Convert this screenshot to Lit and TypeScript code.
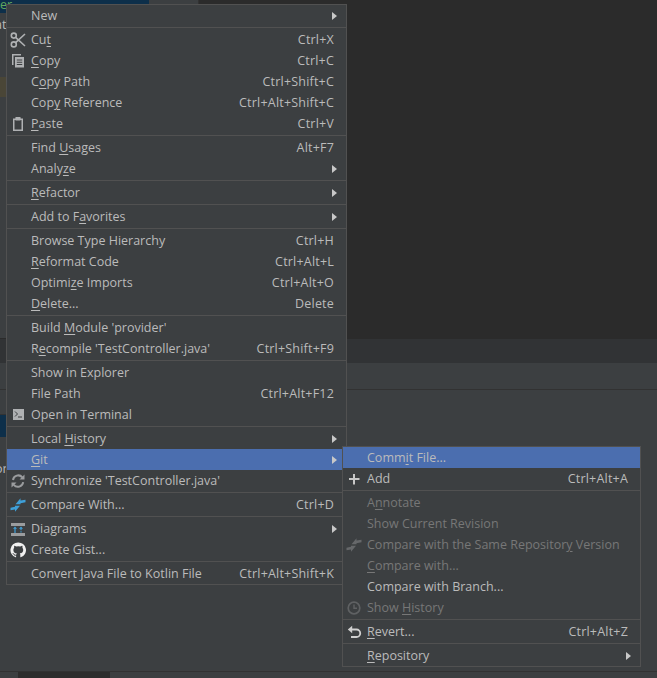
import { LitElement, html, css, svg, nothing, TemplateResult } from "lit";
import { customElement } from "lit/decorators.js";

type Item = { t: string; k?: string; i?: TemplateResult; sub?: boolean; off?: boolean; sel?: boolean } | "-";

const I = {
  cut: svg`<g fill="none" stroke="#afb1b3" stroke-width="1.6"><circle cx="3.800" cy="3.600" r="2.500"/><circle cx="3.800" cy="12.400" r="2.500"/><path d="M5.600 5.400 15 14M5.600 10.600 15 2"/></g>`,
  copy: svg`<path fill="#afb1b3" d="M2 1h9v1.500H3.500V12H2z"/><path fill="#afb1b3" fill-rule="evenodd" d="M5 4h9v10.500H5zM6.800 6.400v1.100h5.400V6.400zM6.800 8.700v1.100h5.400V8.700zM6.800 11v1.100h5.400V11z"/>`,
  paste: svg`<path fill="#afb1b3" fill-rule="evenodd" d="M3 2.500h2.500V1h5v1.500H13V15H3zM4.500 4v9.500h7V4z"/><rect x="5.500" y="2.500" width="5" height="2" fill="#afb1b3"/>`,
  term: svg`<rect x="3" y="2" width="11" height="11" fill="#afb1b3"/><path fill="none" stroke="#3c3f41" stroke-width="1" d="M5 4.500l2.500 2.500L5 9.500M8 10H12"/>`,
  sync: svg`<g fill="none" stroke="#9a9c9e" stroke-width="2"><path d="M3 7a5.300 5.300 0 0 1 9.300-2.700"/><path d="M13.200 9.200A5.300 5.300 0 0 1 3.800 11.800"/></g><path fill="#9a9c9e" d="M14.500 1.500v5h-5zM1.500 14.500v-5h5z"/>`,
  cmp: (c: string) => svg`<path fill=${c} d="M5.500 7.200 10.500 1.200V3.600L15.500 2.800V5.200L10.500 6.200V7.200zM10 8.800 5 14.800V12.400L.5 13.200V10.800L5 9.800V8.800z"/>`,
  diag: svg`<rect x="1" y="2" width="14" height="3" fill="#9a9c9e"/><rect x="1" y="12" width="14" height="3" fill="#9a9c9e"/><path fill="#3e9fd8" d="M5 5.500l2 2.300H5.600V12H4.400V7.800H3zM11 5.500l2 2.300h-1.400v1.400h-1.200V7.800H9zM10.400 10.200h1.200v1.300h-1.200z"/>`,
  gh: svg`<path fill="#f0f0f0" d="M8 .5a7.600 7.600 0 0 0-2.400 14.800c.4.100.5-.2.500-.4v-1.300c-2.100.5-2.500-1-2.500-1-.4-.9-.9-1.100-.9-1.100-.7-.5.100-.5.100-.5.800.1 1.200.8 1.200.8.700 1.200 1.800.8 2.300.6.100-.5.300-.8.500-1-1.700-.2-3.400-.8-3.400-3.700 0-.8.300-1.500.8-2-.1-.2-.3-1 .1-2 0 0 .6-.2 2.100.8a7.300 7.300 0 0 1 3.800 0c1.500-1 2.100-.8 2.100-.8.400 1 .2 1.800.1 2 .5.500.8 1.200.8 2 0 2.900-1.800 3.500-3.400 3.700.3.200.5.700.5 1.400v2.100c0 .2.100.5.500.4A7.600 7.600 0 0 0 8 .5z"/>`,
  plus: svg`<path fill="#c8c8c8" d="M7 3h2v4h4.500v2H9v4.500H7V9H3V7h4z"/>`,
  hist: svg`<circle cx="8" cy="8" r="5.800" fill="none" stroke="#5f6163" stroke-width="1.700"/><path fill="none" stroke="#5f6163" stroke-width="1.400" d="M8 4.500V8.300H11"/>`,
  rev: svg`<path fill="none" stroke="#d0d0d0" stroke-width="1.800" d="M4 5.500h6.500a3.700 3.700 0 0 1 0 7.500H5"/><path fill="#d0d0d0" d="M6.200 1.800v7.400L1.800 5.500z"/>`,
};

const ic = (g: any) => html`<svg width="16" height="16" viewBox="0 0 16 16">${g}</svg>`;

const MAIN: Item[] = [
  { t: "New", sub: true }, "-",
  { t: "Cu&t", k: "Ctrl+X", i: ic(I.cut) },
  { t: "&Copy", k: "Ctrl+C", i: ic(I.copy) },
  { t: "C&opy Path", k: "Ctrl+Shift+C" },
  { t: "Cop&y Reference", k: "Ctrl+Alt+Shift+C" },
  { t: "&Paste", k: "Ctrl+V", i: ic(I.paste) }, "-",
  { t: "Find &Usages", k: "Alt+F7" },
  { t: "Analy&ze", sub: true }, "-",
  { t: "&Refactor", sub: true }, "-",
  { t: "Add to F&avorites", sub: true }, "-",
  { t: "Browse Type Hierarchy", k: "Ctrl+H" },
  { t: "&Reformat Code", k: "Ctrl+Alt+L" },
  { t: "Optimi&ze Imports", k: "Ctrl+Alt+O" },
  { t: "&Delete...", k: "Delete" }, "-",
  { t: "Build &Module 'provider'" },
  { t: "R&ecompile 'TestController.java'", k: "Ctrl+Shift+F9" }, "-",
  { t: "Show in Explorer" },
  { t: "File Path", k: "Ctrl+Alt+F12" },
  { t: "Open in Terminal", i: ic(I.term) }, "-",
  { t: "Local &History", sub: true },
  { t: "&Git", sub: true, sel: true },
  { t: "Synchronize 'TestController.java'", i: ic(I.sync) }, "-",
  { t: "Compare With...", k: "Ctrl+D", i: ic(I.cmp("#3e9fd8")) }, "-",
  { t: "Diagrams", sub: true, i: ic(I.diag) },
  { t: "Create Gist...", i: ic(I.gh) }, "-",
  { t: "Convert Java File to Kotlin File", k: "Ctrl+Alt+Shift+K" },
];

const GIT: Item[] = [
  { t: "Comm&it File...", sel: true },
  { t: "Add", k: "Ctrl+Alt+A", i: ic(I.plus) }, "-",
  { t: "A&nnotate", off: true },
  { t: "Show Current Revision", off: true },
  { t: "Compare with the Same Repositor&y Version", off: true, i: ic(I.cmp("#66686a")) },
  { t: "&Compare with...", off: true },
  { t: "Compare with Branch..." },
  { t: "Show &History", off: true, i: ic(I.hist) }, "-",
  { t: "&Revert...", k: "Ctrl+Alt+Z", i: ic(I.rev) }, "-",
  { t: "&Repository", sub: true },
];

@customElement("app-root")
export class AppRoot extends LitElement {
  static styles = css`
    :host { display: block; width: 657px; height: 678px; position: relative; overflow: hidden; background: #3c3f41; font-family: "Open Sans", "Noto Sans", sans-serif; font-size: 12.5px; color: #bbbbbb; }
    .bg { display: flex; flex-direction: column; height: 678px; }
    .top { height: 338px; display: flex; }
    .tree { width: 198px; background: #3c3f41; display: flex; flex-direction: column; border-right: 1px solid #323232; overflow: hidden; }
    .sel-row { height: 13px; width: 149px; background: #0d2f4a; color: #62a85e; line-height: 10px; flex: none; white-space: nowrap; }
    .at { height: 64px; line-height: 22px; flex: none; color: #bbb; padding-top: 1px; box-sizing: border-box; margin-left: -5px; }
    .brown { height: 20px; background: #4a4637; flex: none; }
    .editor { flex: 1; background: #2b2b2b; }
    .tabs { height: 25px; background: #313335; border-top: 1px solid #2b2b2b; box-sizing: border-box; }
    .tool { height: 26px; background: #3c3f41; }
    .panel { flex: 1; border-top: 1px solid #323232; background: #3c3f41; overflow: hidden; }
    .band { height: 22px; margin-top: 24px; border-top: 1px solid #323232; background: #0d2f4a; width: 6px; }
    .or { margin-top: 22px; height: 20px; line-height: 20px; color: #bbb; margin-left: -5px; }
    .foot { height: 7px; border-top: 1px solid #323232; display: flex; box-sizing: border-box; }
    .foot span { margin-left: 18px; width: 92px; background: #2d2d2d; }

    .menu { position: absolute; box-sizing: content-box; background: #3c3f41; border: 1px solid #515151; display: flex; flex-direction: column; }
    .main { left: 6px; top: 4px; width: 339px; }
    .git { left: 342px; top: 446px; width: 297px; }
    .row { height: 21px; display: flex; align-items: center; flex: none; padding-right: 12px; white-space: nowrap; }
    .row.sel { background: #4b6eaf; }
    .row.off { color: #777777; }
    .ico { width: 21px; padding-left: 3px; flex: none; display: flex; align-items: center; }
    .lbl { flex: 1; }
    .key { letter-spacing: 0.2px; }
    u { text-underline-offset: 2px; text-decoration-thickness: 1px; }
    .arrow { width: 0; height: 0; border-left: 5px solid #c8c8c8; border-top: 4.5px solid transparent; border-bottom: 4.5px solid transparent; margin-right: -3px; }
    .sep { height: 3px; flex: none; display: flex; align-items: center; }
    .sep i { display: block; height: 1px; width: 100%; background: #515151; }
  `;

  private label(t: string) {
    const p = t.indexOf("&");
    if (p < 0) return t;
    return html`${t.slice(0, p)}<u>${t[p + 1]}</u>${t.slice(p + 2)}`;
  }

  private menu(cls: string, items: Item[]) {
    return html`<div class="menu ${cls}">
      ${items.map((it) =>
        it === "-"
          ? html`<div class="sep"><i></i></div>`
          : html`<div class="row ${it.sel ? "sel" : ""} ${it.off ? "off" : ""}">
              <span class="ico">${it.i ?? nothing}</span>
              <span class="lbl">${this.label(it.t)}</span>
              ${it.k ? html`<span class="key">${it.k}</span>` : nothing}
              ${it.sub ? html`<span class="arrow"></span>` : nothing}
            </div>`
      )}
    </div>`;
  }

  render() {
    return html`
      <div class="bg">
        <div class="top">
          <div class="tree">
            <div class="sel-row">er</div>
            <div class="at">at</div>
            <div class="brown"></div>
          </div>
          <div class="editor"></div>
        </div>
        <div class="tabs"></div>
        <div class="tool"></div>
        <div class="panel"><div class="band"></div><div class="or">or</div></div>
        <div class="foot"><span></span></div>
      </div>
      ${this.menu("main", MAIN)}
      ${this.menu("git", GIT)}
    `;
  }
}
